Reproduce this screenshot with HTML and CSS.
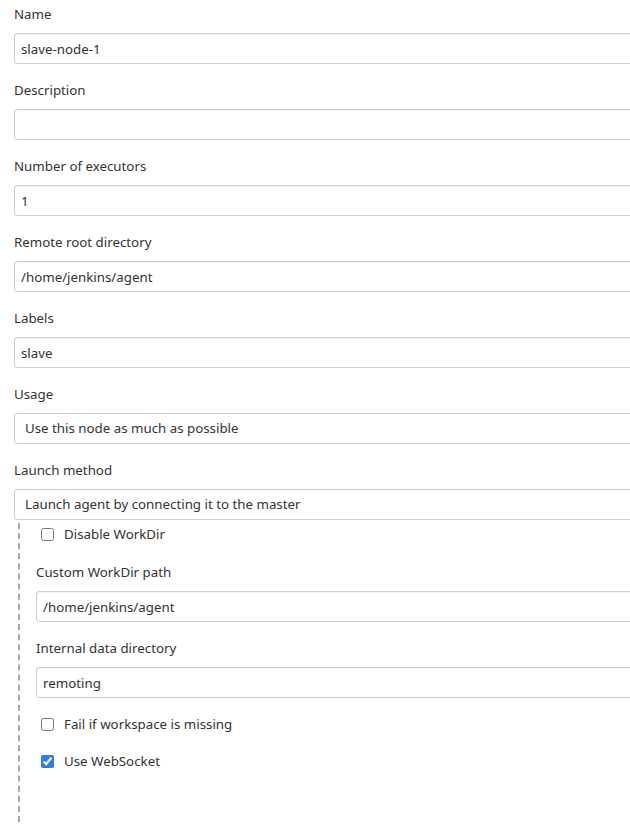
FILE: index.html
```html
<!DOCTYPE html>
<html>
<head>
<meta charset="utf-8">
<link rel="stylesheet" href="styles.css">
</head>
<body>
<form class="form">
  <div class="field">
    <label class="label">Name</label>
    <input class="input" type="text" value="slave-node-1">
  </div>
  <div class="field">
    <label class="label">Description</label>
    <input class="input" type="text" value="">
  </div>
  <div class="field">
    <label class="label">Number of executors</label>
    <input class="input" type="text" value="1">
  </div>
  <div class="field">
    <label class="label">Remote root directory</label>
    <input class="input" type="text" value="/home/jenkins/agent">
  </div>
  <div class="field">
    <label class="label">Labels</label>
    <input class="input" type="text" value="slave">
  </div>
  <div class="field">
    <label class="label">Usage</label>
    <div class="select">Use this node as much as possible</div>
  </div>
  <div class="field field-tight">
    <label class="label">Launch method</label>
    <div class="select">Launch agent by connecting it to the master</div>
  </div>
  <div class="nested">
    <label class="check check-first"><input type="checkbox" class="box"><span>Disable WorkDir</span></label>
    <div class="field">
      <label class="label">Custom WorkDir path</label>
      <input class="input" type="text" value="/home/jenkins/agent">
    </div>
    <div class="field">
      <label class="label">Internal data directory</label>
      <input class="input" type="text" value="remoting">
    </div>
    <label class="check"><input type="checkbox" class="box"><span>Fail if workspace is missing</span></label>
    <label class="check"><input type="checkbox" class="box" checked><span>Use WebSocket</span></label>
  </div>
  <div class="field next">
    <label class="label">Availability</label>
  </div>
</form>
</body>
</html>
```

FILE: styles.css
```css
html, body {
  margin: 0;
  padding: 0;
  overflow: hidden;
  background: #fff;
}
body {
  font-family: "Noto Sans", "Open Sans", sans-serif;
  font-size: 13.3px;
  color: #333;
}
.form {
  padding: 4px 0 0 14px;
  width: 720px;
}
.field {
  margin-bottom: 16px;
}
.field-tight {
  margin-bottom: 0;
}
.label {
  display: block;
  line-height: 20px;
  margin-bottom: 9px;
}
.input, .select {
  display: block;
  box-sizing: border-box;
  width: 700px;
  height: 31px;
  border: 1px solid #ccc;
  border-radius: 3px;
  box-shadow: inset 0 1px 1px rgba(0,0,0,0.06);
  font-family: inherit;
  font-size: 13.3px;
  color: #333;
  padding: 0 6px;
  background: #fff;
  outline: none;
}
.select {
  padding: 0 10px;
  line-height: 29px;
  box-shadow: none;
}
.nested {
  margin: 3px 0 0 4px;
  border-left: 2px dashed #a8a8a8;
  padding: 1px 0 34px 16px;
}
.nested .input {
  width: 680px;
}
.check {
  display: flex;
  align-items: center;
  height: 20px;
  margin-bottom: 17px;
}
.check-first {
  margin-bottom: 18px;
}
.box {
  width: 13px;
  height: 13px;
  margin: 0 10px 0 5px;
  accent-color: #2f7fe2;
}
.next {
  margin-top: 7px;
  padding-left: 22px;
}
```
